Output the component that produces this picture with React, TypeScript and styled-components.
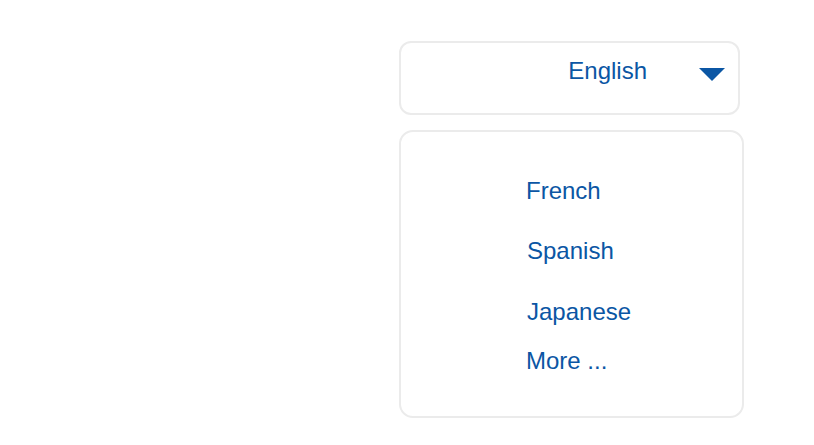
import React from 'react';
import styled, { createGlobalStyle } from 'styled-components';

const GlobalStyle = createGlobalStyle`
    body {
        margin: 0;
        background: #ffffff;
        font-family: "Liberation Sans", Arial, sans-serif;
    }
`

const colors = {
    blue: '#0b56a4',
    border: '#ebebeb',
}

const StyledPage = styled.div`
    display: flex;
    flex-direction: column;
    align-items: flex-start;
    gap: 15px;
    padding: 41px 0 0 399px;
`

const StyledSelect = styled.div`
    box-sizing: border-box;
    width: 341px;
    height: 74px;
    display: flex;
    align-items: flex-start;
    justify-content: flex-end;
    gap: 52px;
    padding: 14px 13px 0 0;
    border: 2px solid ${colors.border};
    border-radius: 12px;
    background: #fff;
`

const StyledSelected = styled.span`
    color: ${colors.blue};
    font-size: 24px;
    line-height: 28px;
`

const StyledCaret = styled.svg`
    margin-top: 11px;
    flex-shrink: 0;
`

const StyledMenu = styled.ul`
    box-sizing: border-box;
    width: 345px;
    margin: 0;
    list-style: none;
    padding: 45px 0 41px 125px;
    border: 2px solid ${colors.border};
    border-radius: 14px;
    background: #fff;
`

interface StyledOptionProps {
    $offset: number,
    $indent: number,
}

const StyledOption = styled.li<StyledOptionProps>`
    color: ${colors.blue};
    font-size: 24px;
    line-height: 28px;
    margin-top: ${(props) => props.$offset}px;
    padding-left: ${(props) => props.$indent}px;
    cursor: pointer;
`

const options = [
    { label: 'French', offset: 0, indent: 0 },
    { label: 'Spanish', offset: 32, indent: 1 },
    { label: 'Japanese', offset: 33, indent: 1 },
    { label: 'More ...', offset: 21, indent: 0 },
]

function App() {
    return (
        <>
            <GlobalStyle />
            <StyledPage>
                <StyledSelect>
                    <StyledSelected>English</StyledSelected>
                    <StyledCaret width="26" height="13" viewBox="0 0 26 13">
                        <polygon points="0,0 26,0 13,13" fill={colors.blue} />
                    </StyledCaret>
                </StyledSelect>
                <StyledMenu>
                    {options.map(option => (
                        <StyledOption key={option.label} $offset={option.offset} $indent={option.indent}>
                            {option.label}
                        </StyledOption>
                    ))}
                </StyledMenu>
            </StyledPage>
        </>
    )
}

export default App;
